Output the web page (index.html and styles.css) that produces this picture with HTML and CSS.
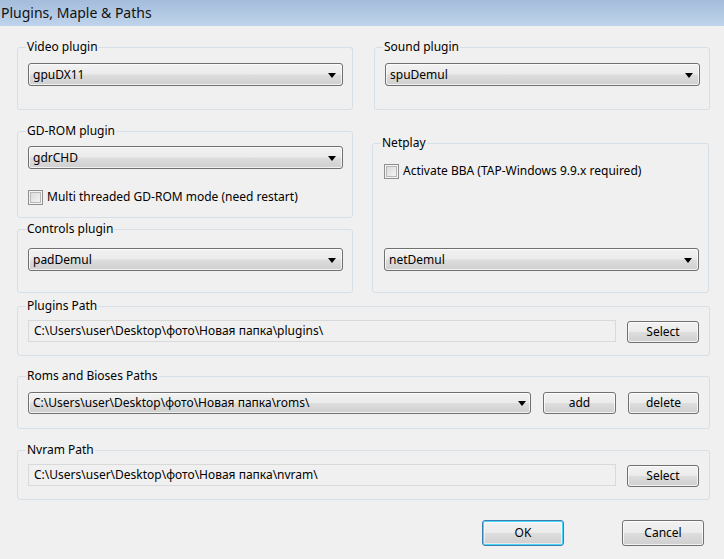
FILE: index.html
```html
<!DOCTYPE html>
<html>
<head>
<meta charset="utf-8">
<link rel="stylesheet" href="styles.css">
</head>
<body>
<div class="window">
  <div class="titlebar">Plugins, Maple &amp; Paths</div>
  <div class="content">
    <div class="row top-row">
      <fieldset class="group g-video">
        <legend>Video plugin</legend>
        <div class="combo"><span>gpuDX11</span><i class="arrow"></i></div>
      </fieldset>
      <fieldset class="group g-sound">
        <legend>Sound plugin</legend>
        <div class="combo"><span>spuDemul</span><i class="arrow"></i></div>
      </fieldset>
    </div>
    <div class="row mid-row">
      <div class="col">
        <fieldset class="group g-gdrom">
          <legend>GD-ROM plugin</legend>
          <div class="combo"><span>gdrCHD</span><i class="arrow"></i></div>
          <label class="check"><span class="box"></span><span>Multi threaded GD-ROM mode (need restart)</span></label>
        </fieldset>
        <fieldset class="group g-controls">
          <legend>Controls plugin</legend>
          <div class="combo"><span>padDemul</span><i class="arrow"></i></div>
        </fieldset>
      </div>
      <fieldset class="group g-net">
        <legend>Netplay</legend>
        <label class="check"><span class="box"></span><span>Activate BBA (TAP-Windows 9.9.x required)</span></label>
        <div class="combo net-combo"><span>netDemul</span><i class="arrow"></i></div>
      </fieldset>
    </div>
    <fieldset class="group path g-plugins">
      <legend>Plugins Path</legend>
      <div class="line">
        <div class="field">C:\Users\user\Desktop\фото\Новая папка\plugins\</div>
        <button class="btn btn-sel">Select</button>
      </div>
    </fieldset>
    <fieldset class="group path g-roms">
      <legend>Roms and Bioses Paths</legend>
      <div class="line">
        <div class="combo wide"><span>C:\Users\user\Desktop\фото\Новая папка\roms\</span><i class="arrow"></i></div>
        <button class="btn btn-add">add</button>
        <button class="btn btn-del">delete</button>
      </div>
    </fieldset>
    <fieldset class="group path g-nvram">
      <legend>Nvram Path</legend>
      <div class="line">
        <div class="field">C:\Users\user\Desktop\фото\Новая папка\nvram\</div>
        <button class="btn btn-sel">Select</button>
      </div>
    </fieldset>
    <div class="actions">
      <button class="btn dlg default">OK</button>
      <button class="btn dlg">Cancel</button>
    </div>
  </div>
</div>
</body>
</html>
```

FILE: styles.css
```css
* { box-sizing: border-box; }
html, body { margin: 0; padding: 0; }
body {
  background: #f0f0f0;
  font-family: "Noto Sans", "Open Sans", sans-serif;
  font-size: 12px;
  color: #000;
  width: 724px;
  height: 559px;
  overflow: hidden;
}
.titlebar {
  height: 26px;
  background: linear-gradient(#a4bddb, #bfd3eb);
  font-size: 14px;
  line-height: 26px;
  padding-left: 1px;
  color: #111;
}
.content {
  padding: 13px 14px 0 17px;
}
.row {
  display: grid;
  grid-template-columns: 336px 336px;
  column-gap: 21px;
}
.group {
  margin: 0;
  min-width: 0;
  border: 1px solid #d5dfe5;
  border-radius: 3px;
  padding: 8px 9px 0 10px;
}
.group legend {
  font-size: 12px;
  line-height: 16px;
  padding: 0 1px;
  margin-left: -2px;
}
.g-video, .g-sound { height: 71px; }
.mid-row { margin-top: 13px; }
.col { display: flex; flex-direction: column; }
.g-gdrom { height: 95px; padding-top: 7px; }
.g-controls { height: 72px; margin-top: 3px; padding-top: 11px; }
.g-net {
  margin-top: 12px;
  margin-left: -2px;
  width: 337px;
  display: flex;
  flex-direction: column;
  padding-top: 12px;
  padding-bottom: 21px;
  padding-left: 11px;
}
.g-net legend { margin-left: -3px; }
.net-combo { margin-top: auto; }

.combo {
  position: relative;
  height: 23px;
  border: 1px solid #707070;
  border-radius: 3px;
  background: linear-gradient(#f2f2f2 0%, #ebebeb 48%, #dddddd 52%, #cfcfcf 100%);
  box-shadow: inset 0 0 0 1px rgba(255,255,255,0.7);
  line-height: 21px;
  padding-left: 4px;
  white-space: nowrap;
}
.arrow {
  position: absolute;
  right: 6px;
  top: 9px;
  width: 0;
  height: 0;
  border-left: 4px solid transparent;
  border-right: 4px solid transparent;
  border-top: 5px solid #000;
}
.check {
  display: flex;
  align-items: center;
  gap: 4px;
  height: 16px;
  line-height: 16px;
}
.g-gdrom .check { margin-top: 20px; }
.box {
  width: 15px;
  height: 15px;
  border: 1px solid #8e8f8f;
  background: linear-gradient(135deg, #d6d6d6, #f8f8f8);
  box-shadow: inset 0 0 0 1px #f4f4f4, inset 0 0 0 2px #b8b8b8;
  flex: none;
}

.group.path { padding-right: 10px; }
.g-plugins { margin-top: 5px; height: 58px; padding-top: 6px; }
.g-roms { margin-top: 12px; height: 61px; padding-top: 8px; }
.g-nvram { margin-top: 13px; height: 58px; padding-top: 6px; }
.line {
  display: flex;
  align-items: center;
  height: 22px;
}
.field {
  flex: 1;
  height: 22px;
  border: 1px solid #d9d9d9;
  background: #f0f0f0;
  line-height: 20px;
  padding-left: 5px;
  white-space: nowrap;
  margin-right: 11px;
}
.combo.wide {
  flex: 1;
  height: 22px;
  line-height: 20px;
  margin-right: 12px;
}
.combo.wide .arrow { top: 8px; right: 4px; }
.btn {
  font-family: inherit;
  font-size: 12px;
  color: #000;
  height: 22px;
  border: 1px solid #707070;
  border-radius: 3px;
  background: linear-gradient(#f2f2f2 0%, #ebebeb 48%, #dddddd 52%, #cfcfcf 100%);
  box-shadow: inset 0 0 0 1px rgba(255,255,255,0.75);
  padding: 0;
  line-height: 20px;
}
.btn-sel { width: 72px; margin-top: 1px; }
.btn-add { width: 73px; margin-right: 12px; }
.btn-del { width: 71px; }

.actions {
  display: flex;
  justify-content: flex-end;
  gap: 58px;
  margin-top: 20px;
  padding-right: 6px;
}
.btn.dlg {
  width: 82px;
  height: 26px;
  line-height: 24px;
}
.btn.default {
  border-color: #3c7fb1;
  box-shadow: inset 0 0 0 1px #48d5f8, inset 0 0 0 2px rgba(255,255,255,0.5);
}
```
